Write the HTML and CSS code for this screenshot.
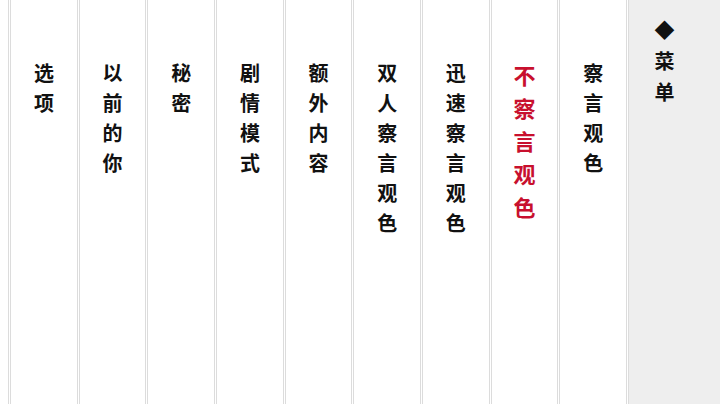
FILE: index.html
```html
<!DOCTYPE html>
<html lang="zh-CN">
<head>
  <meta charset="UTF-8">
  <meta name="viewport" content="width=device-width, initial-scale=1.0">
  <title>菜单</title>
  <link rel="stylesheet" href="styles.css">
</head>
<body>
  <div class="columns">
    <div class="col"><span class="col-text">察言观色</span></div>
    <div class="col"><span class="col-text active">不察言观色</span></div>
    <div class="col"><span class="col-text">迅速察言观色</span></div>
    <div class="col"><span class="col-text">双人察言观色</span></div>
    <div class="col"><span class="col-text">额外内容</span></div>
    <div class="col"><span class="col-text">剧情模式</span></div>
    <div class="col"><span class="col-text">秘密</span></div>
    <div class="col"><span class="col-text">以前的你</span></div>
    <div class="col"><span class="col-text">选项</span></div>
    <div class="col"></div>
  </div>

  <div class="menu">
    <span class="menu-title">◆菜单</span>
  </div>
</body>
</html>
```

FILE: styles.css
```css
* {
  margin: 0;
  padding: 0;
  box-sizing: border-box;
}

body {
  width: 720px;
  height: 404px;
  overflow: hidden;
  display: flex;
  background: #fff;
  color: #111;
  font-family: "Noto Sans CJK SC", "Noto Sans", sans-serif;
}

.columns {
  flex: 1;
  display: flex;
  flex-direction: row-reverse;
  gap: 1px;
  overflow: hidden;
  padding-right: 1px;
}

.col {
  flex: 0 0 67.67px;
  height: 100%;
  display: flex;
  justify-content: center;
  align-items: flex-start;
  padding-top: 63px;
  border-left: 1px solid #dcdcdc;
  border-right: 1px solid #dcdcdc;
}

.col-text {
  writing-mode: vertical-rl;
  font-size: 20px;
  font-weight: 700;
  letter-spacing: 10px;
}

.col-text.active {
  font-size: 22px;
  letter-spacing: 11px;
  margin-top: 2px;
  color: #c8102e;
}

.menu {
  flex: 0 0 92px;
  height: 100%;
  background: #eeeeee;
  border-left: 1px solid #dcdcdc;
  padding: 20px 0 0 21px;
}

.menu-title {
  writing-mode: vertical-rl;
  font-size: 20px;
  font-weight: 700;
  letter-spacing: 11px;
  color: #111;
}
```
